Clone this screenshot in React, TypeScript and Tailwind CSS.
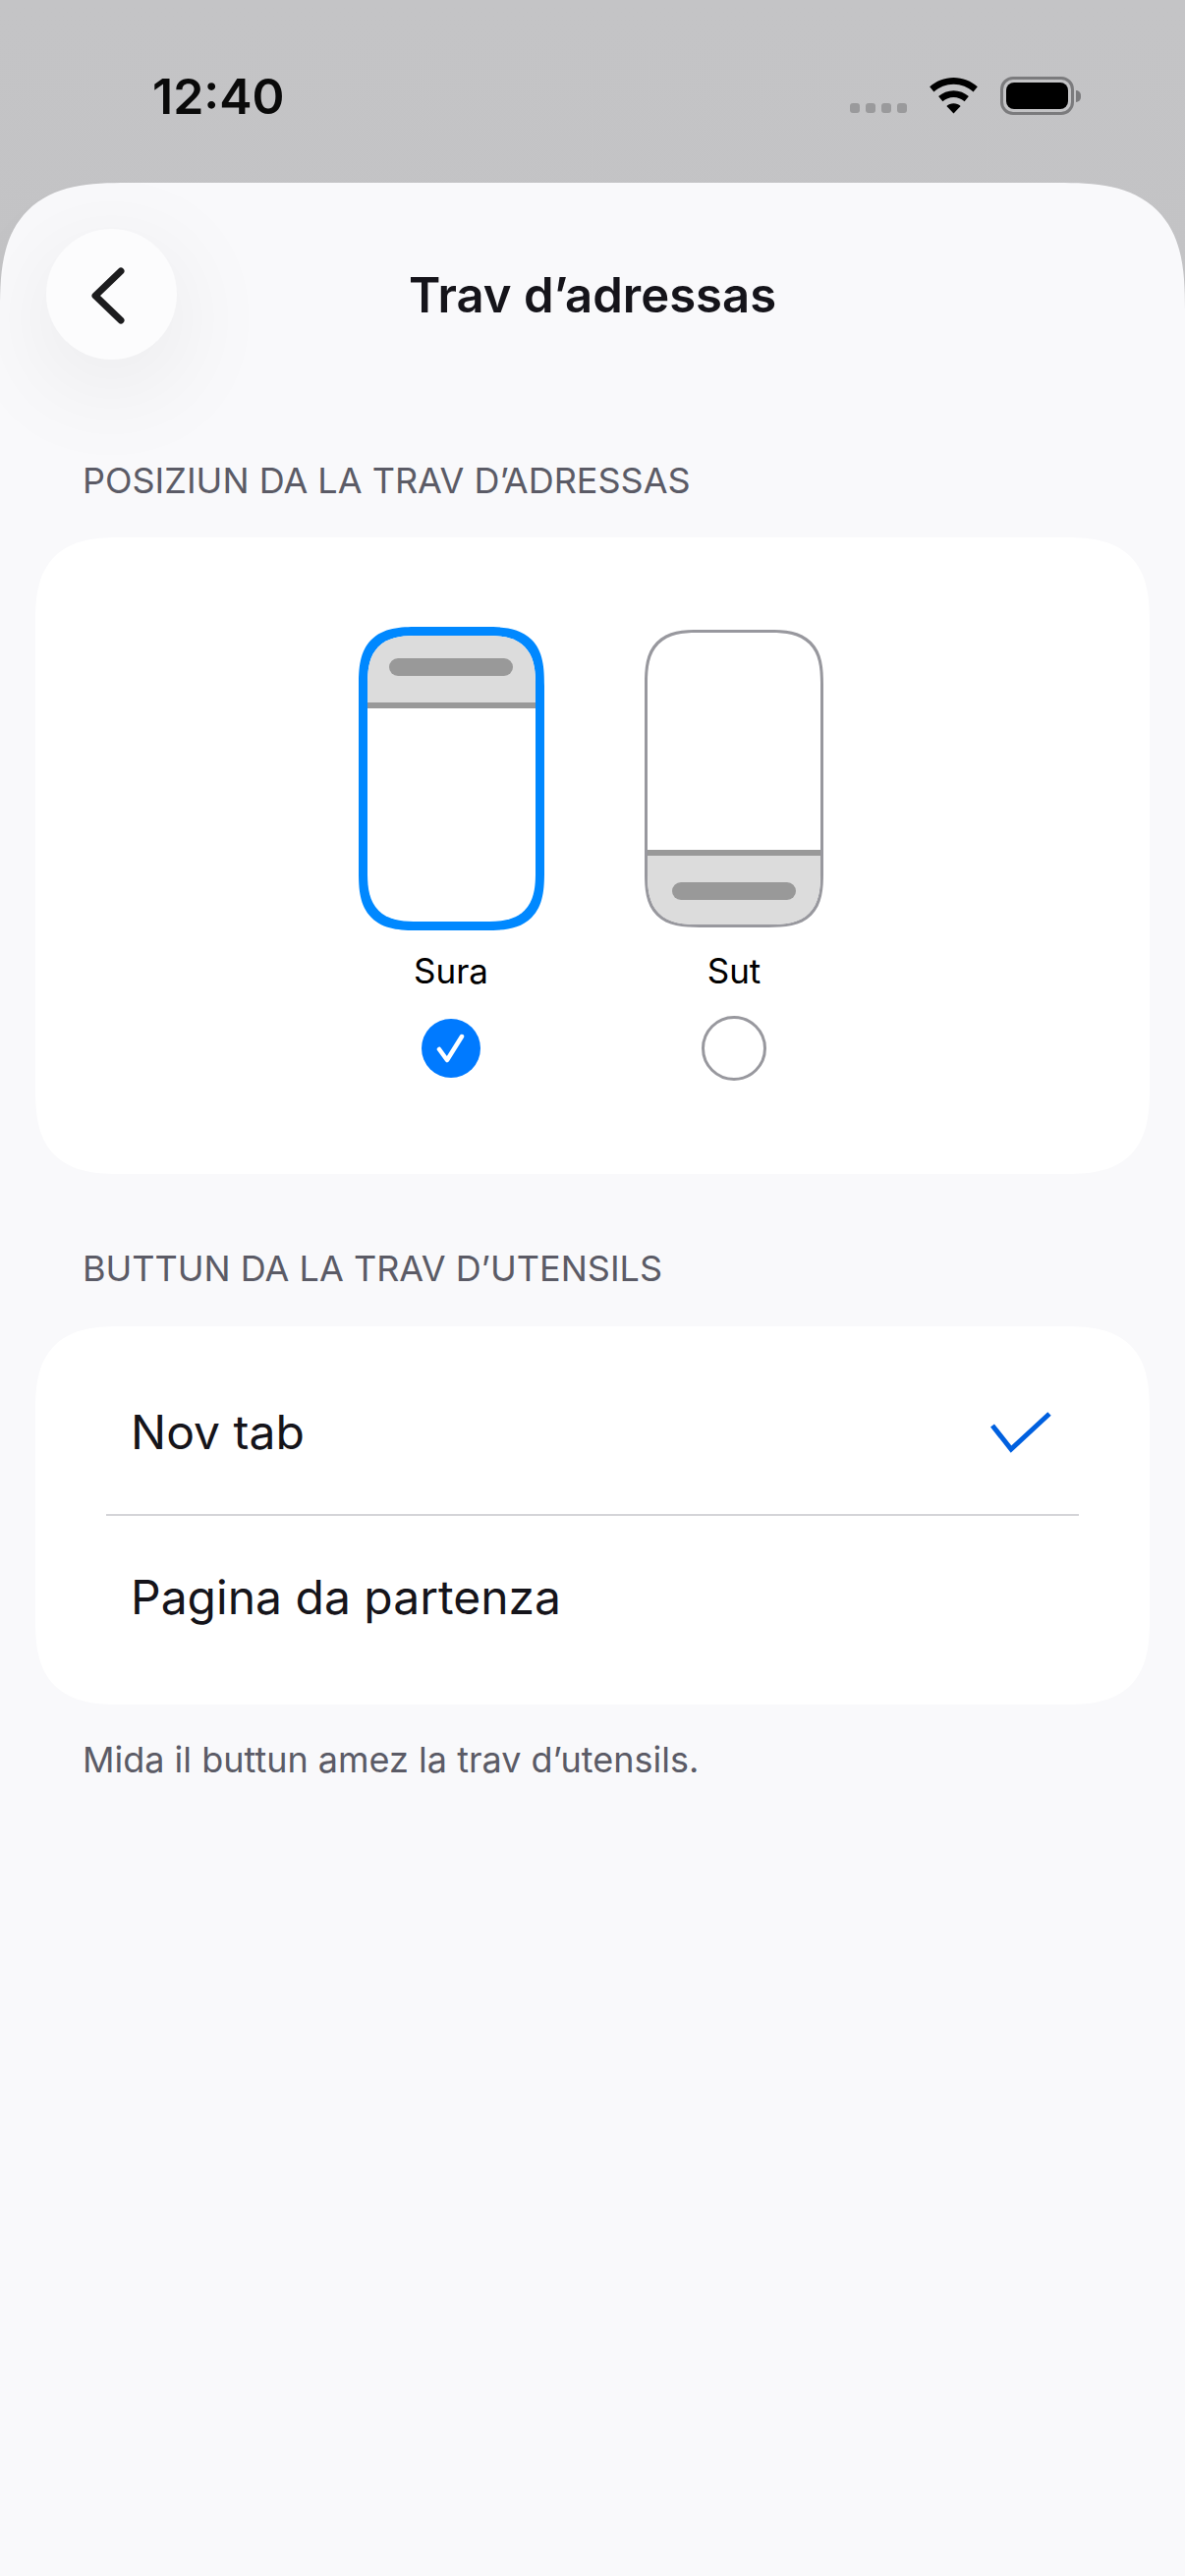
const font = { fontFamily: "Inter, 'Noto Sans', sans-serif" }

const WifiIcon = () => (
  <svg width="51" height="37" viewBox="0 0 52 38" fill="#000">
    <path d="M26 0C35.5 0 44.4 3.6 51 9.6L46.6 15C41 10 33.8 7 26 7S11 10 5.4 15L1 9.6C7.6 3.6 16.5 0 26 0Z" />
    <path d="M26 13.5C32 13.5 37.5 15.8 41.8 19.6L37.4 25C34.3 22.3 30.3 20.6 26 20.6S17.7 22.3 14.6 25L10.2 19.6C14.5 15.8 20 13.5 26 13.5Z" />
    <path d="M26 27C28.8 27 31.3 28 33.3 29.7L26 37.5L18.7 29.7C20.7 28 23.2 27 26 27Z" />
  </svg>
)

const Battery = () => (
  <div className="flex items-center gap-[2px] mb-[-1px]">
    <div className="w-[75px] h-[39px] rounded-[13px] border-[3px] border-[#7b7b7d] p-[3px]">
      <div className="w-full h-full rounded-[8px] bg-black" />
    </div>
    <div className="w-[5px] h-[12px] rounded-r-full bg-[#7b7b7d]" />
  </div>
)

const SectionLabel = ({ children }: { children: string }) => (
  <p className="px-[84px] text-[36px] leading-[44px] text-[#5b5b66]">{children}</p>
)

const PhoneTop = () => (
  <div className="w-[189px] h-[309px] rounded-[60px] [corner-shape:superellipse(1.5)] border-[9px] border-[#0088ff] overflow-hidden bg-white flex flex-col">
    <div className="h-[74px] bg-[#dcdcdc] flex justify-center pt-[23px] border-b-[6px] border-[#999999]">
      <div className="w-[126px] h-[18px] rounded-full bg-[#999999]" />
    </div>
  </div>
)

const PhoneBottom = () => (
  <div className="w-[182px] h-[303px] rounded-[56px] [corner-shape:superellipse(1.5)] border-[3px] border-[#98989e] overflow-hidden bg-white flex flex-col justify-end">
    <div className="h-[76px] bg-[#dcdcdc] flex justify-center pt-[27px] border-t-[6px] border-[#999999]">
      <div className="w-[126px] h-[18px] rounded-full bg-[#999999]" />
    </div>
  </div>
)

export default function App() {
  return (
    <div style={font} className="w-[1206px] h-[2622px] flex flex-col bg-gradient-to-b from-[#c4c4c6] to-[#bbbbbd] overflow-hidden">
      {/* Status bar */}
      <div className="h-[186px] shrink-0 flex justify-between pl-[155px] pr-[106px]">
        <p className="mt-[68px] text-[50px] leading-[60px] font-semibold text-[#0a0a0a]">12:40</p>
        <div className="mt-[78px] h-[38px] flex items-end">
          <div className="flex gap-[6px] mr-[22px] mb-[1px]">
            {[0, 1, 2, 3].map(i => (
              <div key={i} className="w-[10px] h-[10px] rounded-[3px] bg-[#9a9a9c]" />
            ))}
          </div>
          <WifiIcon />
          <div className="w-[22px]" />
          <Battery />
        </div>
      </div>

      {/* Sheet */}
      <div className="flex-1 bg-[#f9f9fb] rounded-t-[130px] [corner-shape:superellipse(1.5)] pt-[47px]">
        <div className="flex items-center px-[47px] h-[133px]">
          <button className="w-[133px] h-[133px] rounded-full bg-[#fcfcfd] flex items-center justify-center shadow-[0_24px_110px_rgba(0,0,0,0.08)]">
            <svg width="42" height="60" viewBox="0 0 42 60" fill="none" stroke="#1c1c1e" strokeWidth="7" strokeLinecap="round" strokeLinejoin="round" className="mr-[6px] mt-[2px]">
              <path d="M33 5 L7 30 L33 55" />
            </svg>
          </button>
          <h1 className="flex-1 text-center text-[49px] leading-[60px] pt-[2px] font-semibold text-[#15141a]">Trav d’adressas</h1>
          <div className="w-[133px]" />
        </div>

        <div className="mt-[101px]">
          <SectionLabel>POSIZIUN DA LA TRAV D’ADRESSAS</SectionLabel>
        </div>

        <div className="mx-[36px] mt-[36px] h-[648px] rounded-[90px] [corner-shape:superellipse(1.5)] bg-white pt-[91px] flex justify-center gap-[48px]">
          <div className="w-[240px] flex flex-col items-center">
            <div className="h-[309px] flex items-center"><PhoneTop /></div>
            <p className="mt-[19px] text-[35px] leading-[44px] text-black">Sura</p>
            <div className="mt-[24px] h-[66px] flex items-center">
              <div className="w-[60px] h-[60px] rounded-full bg-[#007aff] flex items-center justify-center">
                <svg width="30" height="30" viewBox="0 0 30 30" fill="none" stroke="#fff" strokeWidth="4.5" strokeLinecap="round" strokeLinejoin="round">
                  <path d="M3 16 L11 27 L26 3" />
                </svg>
              </div>
            </div>
          </div>
          <div className="w-[240px] flex flex-col items-center">
            <div className="h-[309px] flex items-center"><PhoneBottom /></div>
            <p className="mt-[19px] text-[35px] leading-[44px] text-black">Sut</p>
            <div className="mt-[24px] h-[66px] flex items-center">
              <div className="w-[66px] h-[66px] rounded-full border-[3px] border-[#98989e]" />
            </div>
          </div>
        </div>

        <div className="mt-[74px]">
          <SectionLabel>BUTTUN DA LA TRAV D’UTENSILS</SectionLabel>
        </div>

        <div className="mx-[36px] mt-[37px] h-[385px] rounded-[90px] [corner-shape:superellipse(1.5)] bg-white flex flex-col">
          <div className="h-[191px] flex items-center justify-between pt-[24px] pl-[97px] pr-[100px]">
            <span className="text-[48px] text-[#15141a]">Nov tab</span>
            <svg width="62" height="42" viewBox="0 0 62 42" fill="none" stroke="#0060df" strokeWidth="5">
              <path d="M2 14 L21 38 L60 2" />
            </svg>
          </div>
          <div className="mx-[72px] h-[2px] bg-[#d4d4d8]" />
          <div className="flex-1 flex items-center pb-[26px] pl-[97px]">
            <span className="text-[48px] text-[#15141a]">Pagina da partenza</span>
          </div>
        </div>

        <p className="mt-[34px] px-[84px] text-[36px] leading-[44px] text-[#5b5b66]">Mida il buttun amez la trav d’utensils.</p>
      </div>
    </div>
  )
}
